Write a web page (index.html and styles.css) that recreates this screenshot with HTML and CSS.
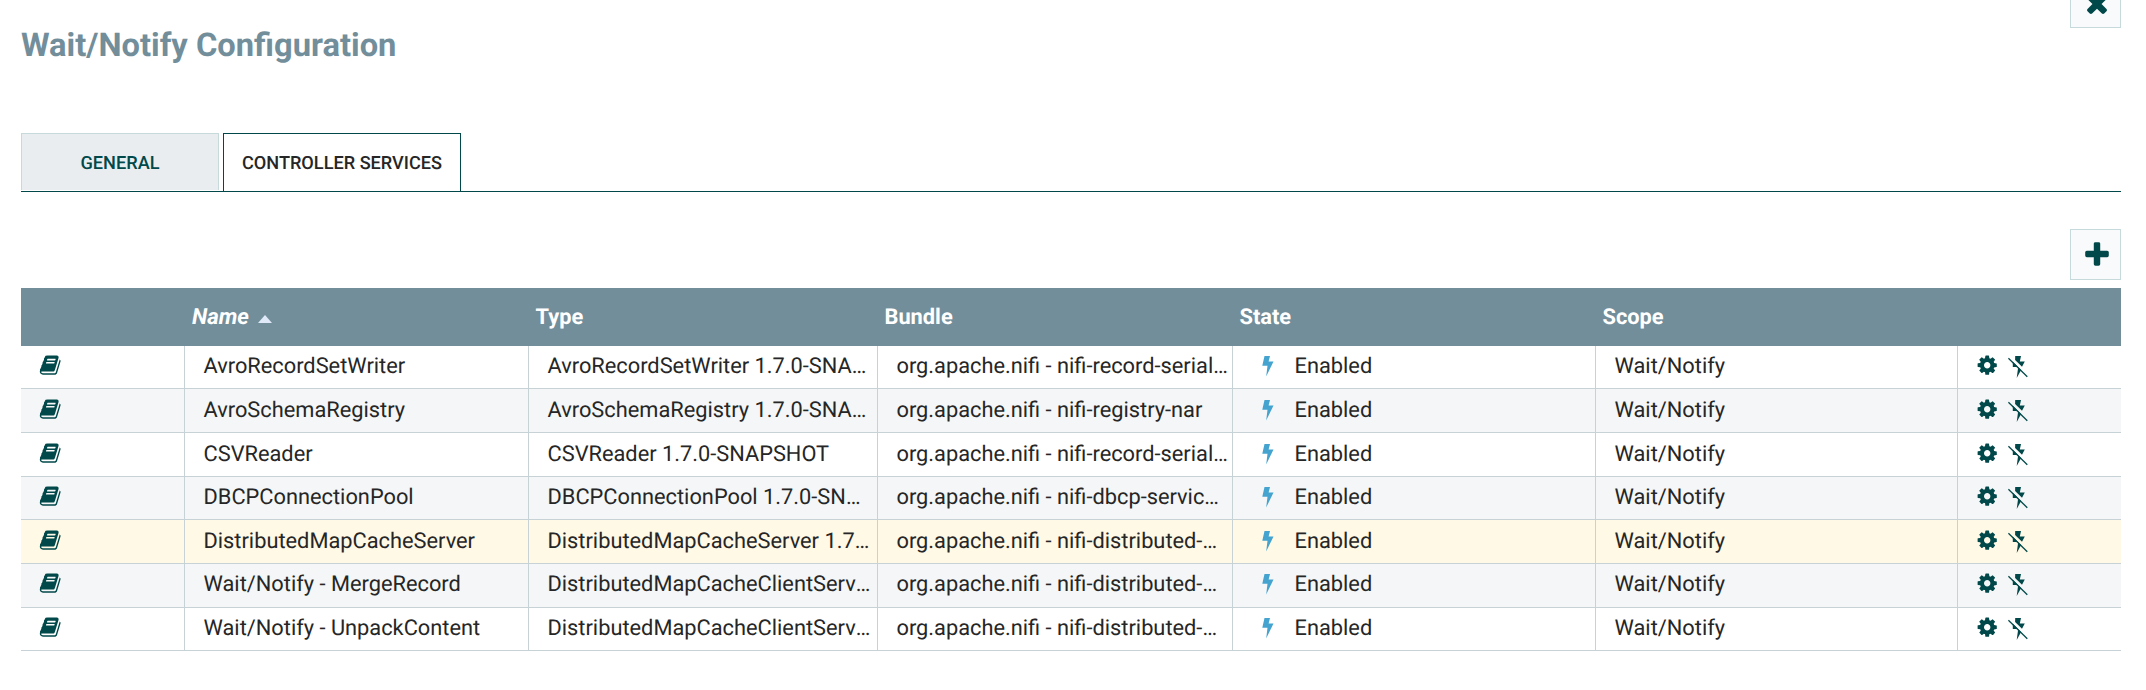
FILE: index.html
```html
<!DOCTYPE html>
<html lang="en">
<head>
<meta charset="utf-8">
<title>Wait/Notify Configuration</title>
<link rel="stylesheet" href="styles.css">
</head>
<body>
<svg class="sprite" aria-hidden="true">
  <symbol id="book" viewBox="0 0 1792 1792"><path d="M1703 478q40 57 18 129l-275 906q-19 64-76.500 107.500t-122.500 43.500h-923q-77 0-148.500-53.500t-99.500-131.500q-24-67-2-127 0-4 3-27t4-37q1-8-3-21.500t-3-19.500q2-11 8-21t16.500-23.500 16.500-23.500q23-38 45-91.500t30-91.500q3-10 .5-30t-.5-28q3-11 17-28t17-23q21-36 42-92t25-90q1-9-2.500-32t.5-28q4-13 22-30.500t22-22.500q19-26 42.500-84.500t27.500-96.500q1-8-3-25.500t-2-26.500q2-8 9-18t18-23 17-21q8-12 16.500-30.500t15-35 16-36 19.500-32 26.500-23.500 36-11.500 47.500 5.500l-1 3q38-9 51-9h761q74 0 114 56t18 130l-274 906q-36 119-71.500 153.500t-128.500 34.500h-869q-27 0-38 15-11 16-1 43 24 70 144 70h923q29 0 56-15.500t35-41.500l300-987q7-22 5-57 38 15 59 43zm-1064 2q-4 13 2 22.500t20 9.500h608q13 0 25.500-9.500t16.500-22.500l21-64q4-13-2-22.500t-20-9.500h-608q-13 0-25.500 9.500t-16.500 22.500zm-83 256q-4 13 2 22.500t20 9.500h608q13 0 25.500-9.500t16.500-22.500l21-64q4-13-2-22.500t-20-9.500h-608q-13 0-25.500 9.500t-16.500 22.500z"/></symbol>
  <symbol id="cog" viewBox="0 0 1792 1792"><path d="M1152 896q0-106-75-181t-181-75-181 75-75 181 75 181 181 75 181-75 75-181zm512-109v222q0 12-8 23t-20 13l-185 28q-19 54-39 91 35 50 107 138 10 12 10 25t-9 23q-27 37-99 108t-94 71q-12 0-26-9l-138-108q-44 23-91 38-16 136-29 186-7 28-36 28h-222q-14 0-24.500-8.500t-11.500-21.500l-28-184q-49-16-90-37l-141 107q-10 9-25 9-14 0-25-11-126-114-165-168-7-10-7-23 0-12 8-23 15-21 51-66.500t54-70.500q-27-50-41-99l-183-27q-13-2-21-12.500t-8-23.500v-222q0-12 8-23t19-13l186-28q14-46 39-92-40-57-107-138-10-12-10-24 0-10 9-23 26-36 98.500-107.500t94.500-71.500q13 0 26 10l138 107q44-23 91-38 16-136 29-186 7-28 36-28h222q14 0 24.500 8.500t11.500 21.500l28 184q49 16 90 37l142-107q9-9 24-9 13 0 25 10 129 119 165 170 7 8 7 22 0 12-8 23-15 21-51 66.500t-54 70.500q26 50 41 98l183 28q13 2 21 12.500t8 23.500z"/></symbol>
  <symbol id="plus" viewBox="0 0 1792 1792"><path d="M1600 736v192q0 40-28 68t-68 28h-416v416q0 40-28 68t-68 28h-192q-40 0-68-28t-28-68v-416h-416q-40 0-68-28t-28-68v-192q0-40 28-68t68-28h416v-416q0-40 28-68t68-28h192q40 0 68 28t28 68v416h416q40 0 68 28t28 68z"/></symbol>
  <symbol id="times" viewBox="0 0 1792 1792"><path d="M1490 1322q0 40-28 68l-136 136q-28 28-68 28t-68-28l-294-294-294 294q-28 28-68 28t-68-28l-136-136q-28-28-28-68t28-68l294-294-294-294q-28-28-28-68t28-68l136-136q28-28 68-28t68 28l294 294 294-294q28-28 68-28t68 28l136 136q28 28 28 68t-28 68l-294 294 294 294q28 28 28 68z"/></symbol>
  <symbol id="flash" viewBox="0 0 12 21"><path d="M2.500 0H8L6.600 5.500H11.500L4.200 20.500L5.500 9.800H.3Z"/></symbol>
  <symbol id="flash-off" viewBox="0 0 20 22"><path d="M7.200 0H13L11.800 5.500H16.800L14 10.800L7.100 3.900ZM4.800 5.800L13.100 14.100L8.700 22L10.200 10.900H4.800Z"/><path d="M.4 2.300L19.300 20.700" fill="none" stroke="currentColor" stroke-width="1.300"/></symbol>
</svg>
<main class="page">
  <header class="top">
    <h1 class="title">Wait/Notify Configuration</h1>
    <button class="square close" aria-label="Close"><svg class="glyph"><use href="#times"/></svg></button>
  </header>
  <nav class="tabs">
    <a class="tab general">GENERAL</a>
    <a class="tab selected">CONTROLLER SERVICES</a>
  </nav>
  <div class="toolbar">
    <button class="square" aria-label="Add"><svg class="glyph"><use href="#plus"/></svg></button>
  </div>
  <section class="table" id="services">
    <div class="row head">
      <div></div><div class="sorted"><span>Name</span><i class="arrow"></i></div><div>Type</div><div>Bundle</div><div>State</div><div>Scope</div><div></div>
    </div>
  </section>
</main>
<script src="services.js"></script>
</body>
</html>
```
FILE: styles.css
```css
* { box-sizing: border-box; }
body { margin: 0; background: #fff; color: #262626; font-family: Roboto, "Liberation Sans", sans-serif; font-size: 21.800px; text-rendering: geometricPrecision; }
.sprite { display: none; }
.page { width: 2146px; height: 690px; padding: 0 25px 0 21px; overflow: hidden; }
.top { display: flex; justify-content: space-between; height: 133px; }
.title { margin: 25px 0 0; font-size: 32.700px; line-height: 40px; font-weight: 700; color: #728e9b; }
.square { display: flex; align-items: center; justify-content: center; width: 51px; height: 51px; padding: 0 0 0 2px; border: 1px solid #c7dadb; background: #f9fafb; color: #004849; }
.close { margin-top: -23px; }
.glyph { width: 30px; height: 30px; fill: currentColor; }
.tabs { display: flex; gap: 4px; height: 59px; border-bottom: 1px solid #004849; }
.tab { height: 57px; border: 1px solid #c7dadb; border-bottom: 0; font-size: 18.150px; font-weight: 500; line-height: 60px; text-align: center; white-space: nowrap; }
.general { width: 198px; background: #e9edf0; color: #004849; }
.selected { width: 238px; height: 58px; border-color: #004849; background: #fff; }
.toolbar { display: flex; justify-content: flex-end; height: 96px; padding-top: 37px; }
.row { display: grid; grid-template-columns: 164px 344px 349px 355px 363px 362px 163px; height: 44px; border-bottom: 1px solid #c7d2d7; }
.row.short { height: 43px; }
.row.even { background: #f4f6f7; }
.row.active { background: #fff9e6; }
.cell { padding: 0 4px 0 18.500px; border-right: 1px solid #c7d2d7; line-height: 42px; white-space: nowrap; overflow: hidden; text-overflow: ellipsis; }
.row.low .cell { padding-top: 1px; }
.cell:last-child { border-right: 0; }
.icons { display: flex; }
.head { height: 58px; border: 0; background: #728e9b; color: #fff; font-weight: 700; line-height: 59px; }
.head > div { padding-left: 6.500px; }
.head > .sorted { display: flex; padding-left: 7px; font-size: 22.200px; font-style: italic; }
.arrow { margin: 27px 0 0 9px; width: 14px; height: 8px; background: #dfe9f8; clip-path: polygon(50% 0, 100% 100%, 0 100%); }
.book, .cog { width: 22.400px; height: 22.400px; margin-top: 8px; fill: #004849; }
.book { margin-left: -.5px; }
.cog { margin-left: -.5px; }
.off { width: 20px; height: 22px; margin: 9.500px 0 0 10px; color: #004849; fill: #004849; }
.flash { width: 12px; height: 21px; margin: 9.500px 21px 0 10px; fill: #44a3cf; }
```
FILE: services.js
```js
const services = [
  ["AvroRecordSetWriter", "AvroRecordSetWriter 1.7.0-SNAPSHOT", "org.apache.nifi - nifi-record-serialization-services-nar"],
  ["AvroSchemaRegistry", "AvroSchemaRegistry 1.7.0-SNAPSHOT", "org.apache.nifi - nifi-registry-nar"],
  ["CSVReader", "CSVReader 1.7.0-SNAPSHOT", "org.apache.nifi - nifi-record-serialization-services-nar"],
  ["DBCPConnectionPool", "DBCPConnectionPool 1.7.0-SNAPSHOT", "org.apache.nifi - nifi-dbcp-service-nar"],
  ["DistributedMapCacheServer", "DistributedMapCacheServer 1.7.0-SNAPSHOT", "org.apache.nifi - nifi-distributed-cache-services-nar"],
  ["Wait/Notify - MergeRecord", "DistributedMapCacheClientService 1.7.0-SNAPSHOT", "org.apache.nifi - nifi-distributed-cache-services-nar"],
  ["Wait/Notify - UnpackContent", "DistributedMapCacheClientService 1.7.0-SNAPSHOT", "org.apache.nifi - nifi-distributed-cache-services-nar"]
];
const icon = (name, cls) => `<svg class="${cls}"><use href="#${name}"/></svg>`;
document.getElementById("services").insertAdjacentHTML("beforeend", services.map(([name, type, bundle], i) => `
  <div class="row${i % 3 === 0 ? " short" : ""}${[1, 2, 4].includes(i) ? " low" : ""}${i === 4 ? " active" : i % 2 ? " even" : ""}">
    <div class="cell icons">${icon("book", "book")}</div>
    <div class="cell">${name}</div>
    <div class="cell">${type}</div>
    <div class="cell">${bundle}</div>
    <div class="cell icons">${icon("flash", "flash")}<span>Enabled</span></div>
    <div class="cell">Wait/Notify</div>
    <div class="cell icons">${icon("cog", "cog")}${icon("flash-off", "off")}</div>
  </div>`).join(""));
```
